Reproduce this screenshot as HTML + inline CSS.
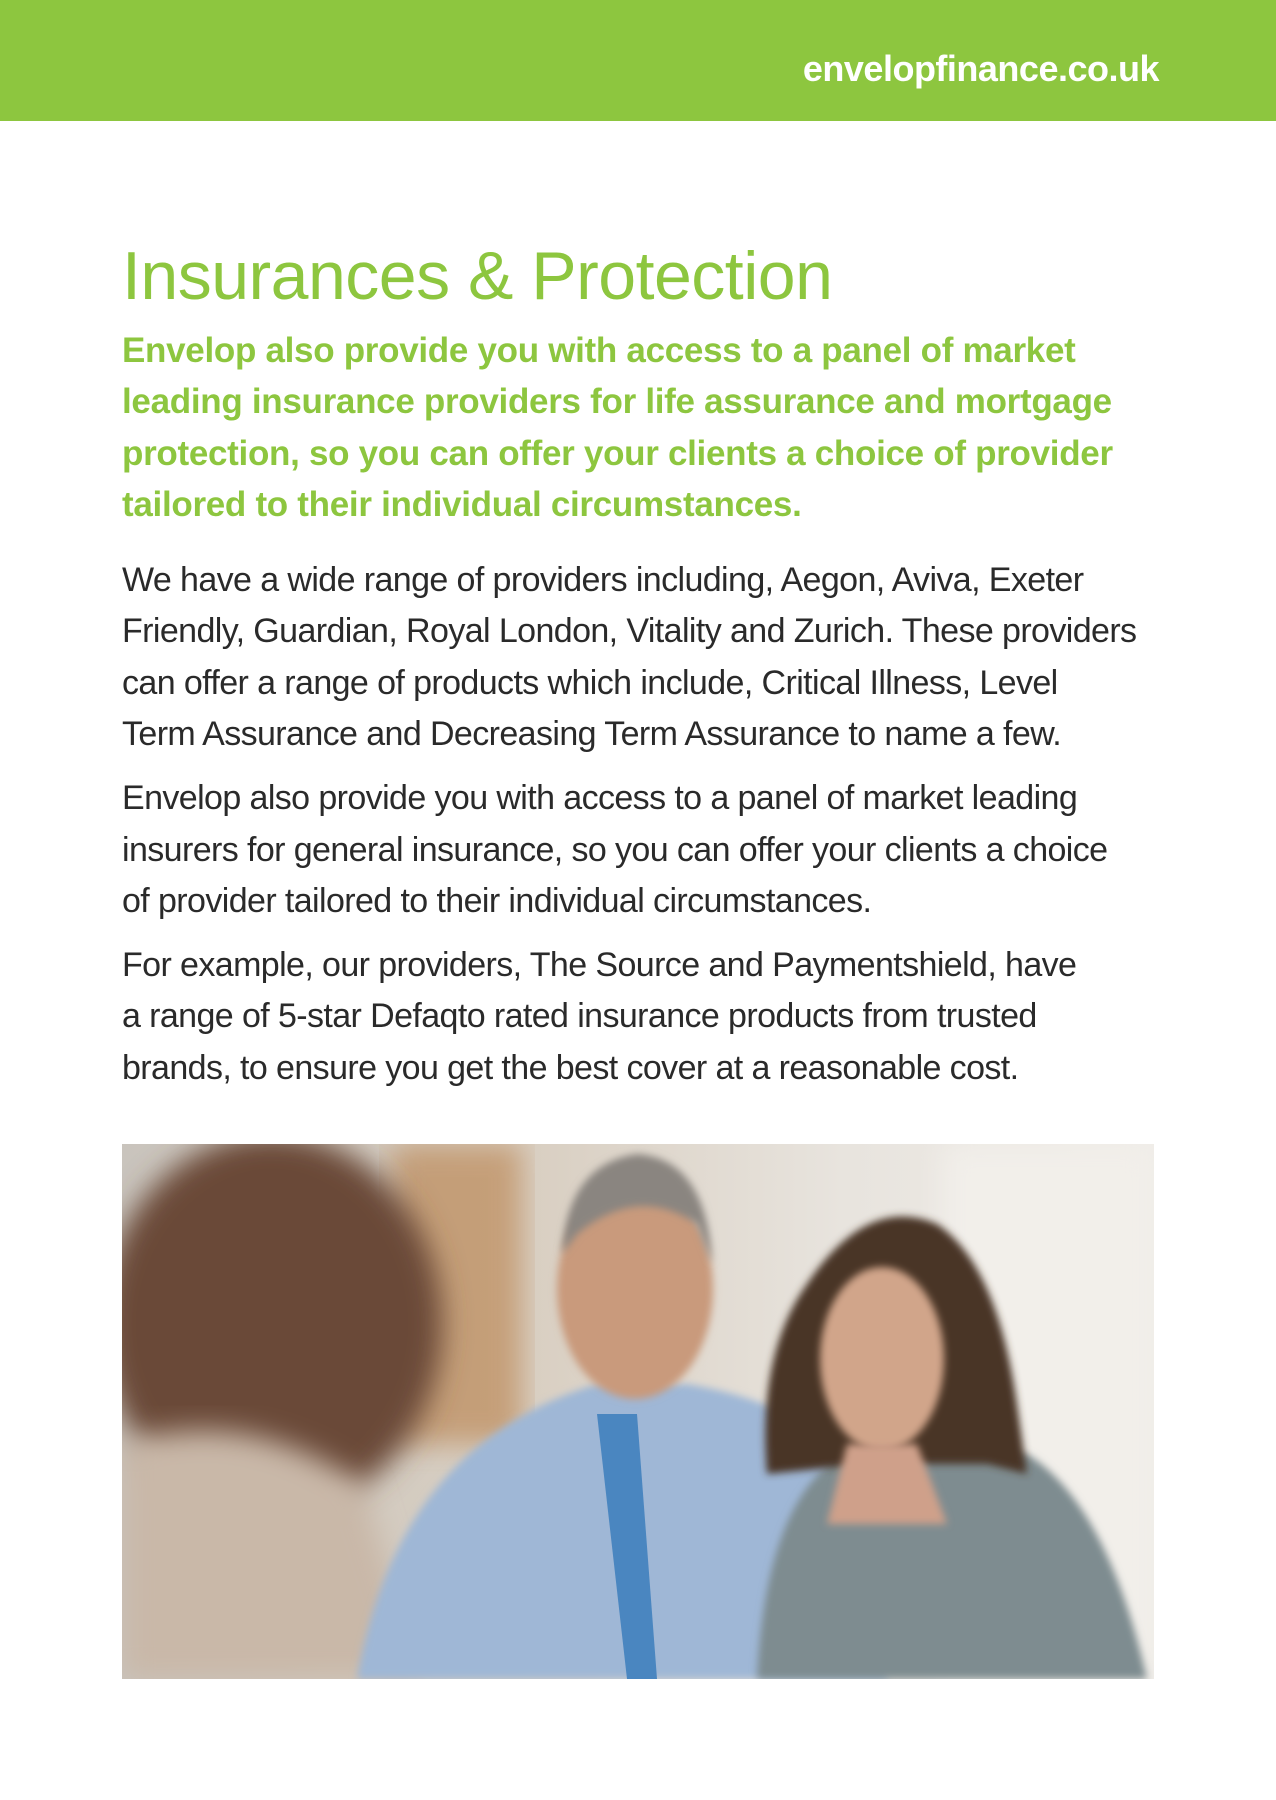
<!DOCTYPE html>
<html><head><meta charset="utf-8"><style>
*{margin:0;padding:0}
body{width:1276px;height:1800px;background:#fff;position:relative;overflow:hidden;font-family:"Liberation Sans",sans-serif}
.hd{position:absolute;left:0;top:0;width:1276px;height:121px;background:#8dc63f}
.hd span{position:absolute;right:117px;top:48px;color:#fff;font-weight:bold;font-size:36px;letter-spacing:-0.5px}
h1{position:absolute;left:122px;top:237px;font-weight:normal;color:#8dc63f;font-size:68px;letter-spacing:-0.5px;white-space:nowrap}
.l{position:absolute;left:122px;white-space:nowrap}
.g{color:#8dc63f;font-weight:bold;font-size:35px;letter-spacing:-0.3px}
.b{color:#2a2a2a;font-size:34px;letter-spacing:-0.6px}
.img{position:absolute;left:122px;top:1144px;width:1032px;height:535px;overflow:hidden;background:linear-gradient(90deg,#c9c4bd 0%,#d9cfc2 40%,#e8e4de 70%,#efece8 100%)}
</style></head><body>
<div class="hd"><span>envelopfinance.co.uk</span></div>
<h1>Insurances &amp; Protection</h1>
<div class="l g" style="top:331px">Envelop also provide you with access to a panel of market</div>
<div class="l g" style="top:382px">leading insurance providers for life assurance and mortgage</div>
<div class="l g" style="top:434px">protection, so you can offer your clients a choice of provider</div>
<div class="l g" style="top:485px">tailored to their individual circumstances.</div>
<div class="l b" style="top:561px">We have a wide range of providers including, Aegon, Aviva, Exeter</div>
<div class="l b" style="top:612px">Friendly, Guardian, Royal London, Vitality and Zurich. These providers</div>
<div class="l b" style="top:664px">can offer a range of products which include, Critical Illness, Level</div>
<div class="l b" style="top:715px">Term Assurance and Decreasing Term Assurance to name a few.</div>
<div class="l b" style="top:779px">Envelop also provide you with access to a panel of market leading</div>
<div class="l b" style="top:831px">insurers for general insurance, so you can offer your clients a choice</div>
<div class="l b" style="top:882px">of provider tailored to their individual circumstances.</div>
<div class="l b" style="top:946px">For example, our providers, The Source and Paymentshield, have</div>
<div class="l b" style="top:997px">a range of 5-star Defaqto rated insurance products from trusted</div>
<div class="l b" style="top:1049px">brands, to ensure you get the best cover at a reasonable cost.</div>
<div class="img">
<svg width="1032" height="535" viewBox="0 0 1032 535">
<defs><filter id="bl"><feGaussianBlur stdDeviation="14"/></filter><filter id="b2"><feGaussianBlur stdDeviation="4"/></filter></defs>
<rect x="270" y="0" width="130" height="300" fill="#b9804a" opacity=".6" filter="url(#bl)"/>
<rect x="820" y="0" width="212" height="535" fill="#f2efea" filter="url(#bl)"/>
<ellipse cx="150" cy="180" rx="170" ry="190" fill="#6b4a37" filter="url(#bl)"/>
<path d="M0 300 Q120 260 240 340 L300 535 L0 535 Z" fill="#c9b8a8" filter="url(#bl)"/>
<g transform="translate(45,0)">
<path d="M190 535 Q230 300 430 240 L520 240 Q640 260 700 330 L720 535 Z" fill="#9fb7d6" filter="url(#b2)"/>
<path d="M430 270 L460 535 L490 535 L470 270 Z" fill="#4a86c0"/>
<ellipse cx="468" cy="145" rx="78" ry="110" fill="#c99a7c" filter="url(#b2)"/>
<path d="M395 110 Q400 20 470 10 Q540 15 545 120 L530 80 Q470 40 410 90 Z" fill="#8a8580" filter="url(#b2)"/>
</g>
<g transform="translate(25,0)">
<path d="M610 535 Q620 330 720 300 L880 310 Q960 360 1000 535 Z" fill="#7e8c90" filter="url(#b2)"/>
<path d="M620 330 Q610 210 660 140 Q720 50 790 80 Q850 120 870 260 L880 330 L840 320 L720 320 Z" fill="#4a3428" filter="url(#b2)"/>
<ellipse cx="735" cy="215" rx="62" ry="92" fill="#d1a58a" filter="url(#b2)"/>
<path d="M700 300 L770 300 L800 380 L680 380 Z" fill="#cfa08a" filter="url(#b2)"/>
</g>
</svg>
</div>
</body></html>
